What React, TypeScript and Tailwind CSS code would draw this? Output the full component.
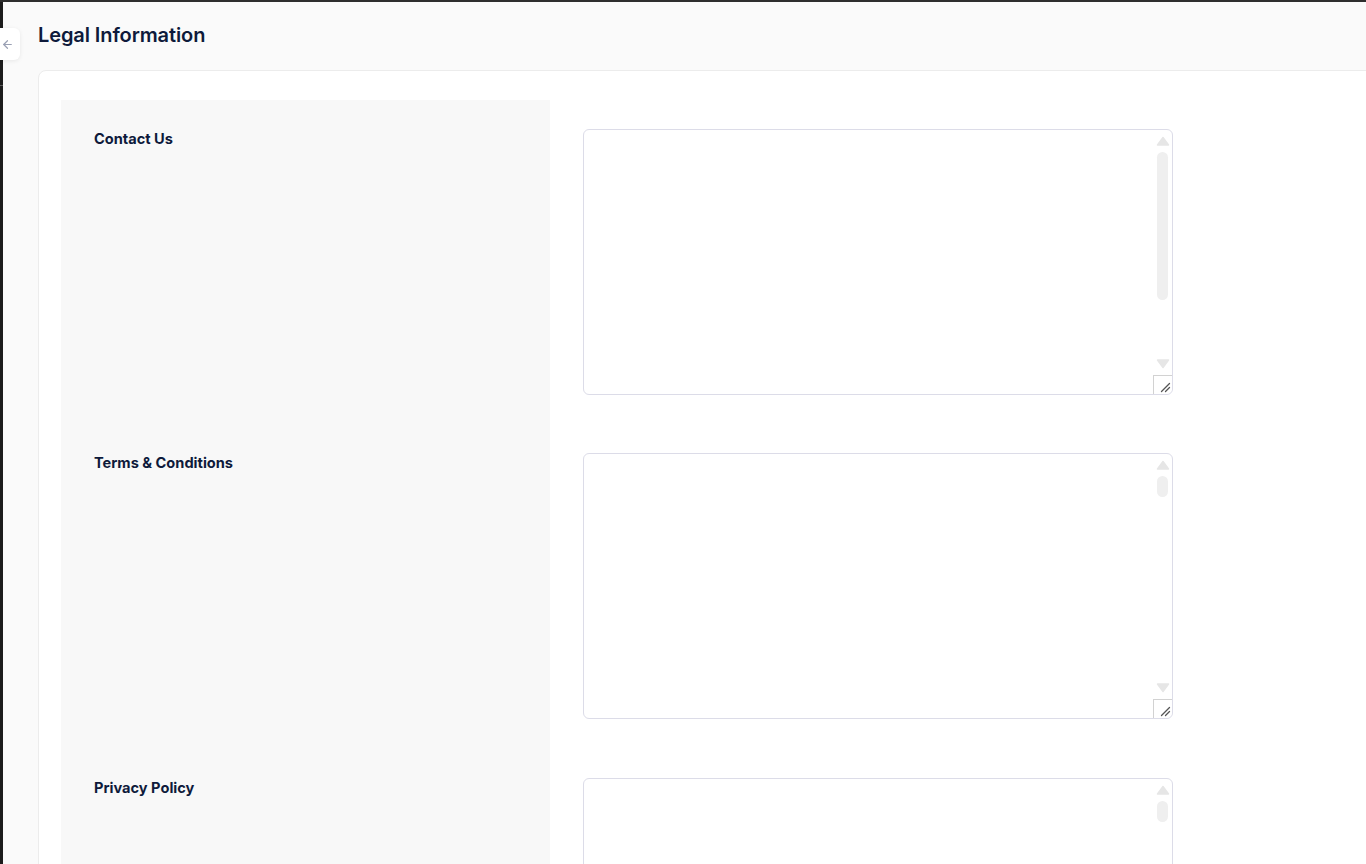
import React from "react";
import { ArrowLeft } from "lucide-react";

const rows = [
  { label: "Contact Us", thumb: 148, pb: "pb-[29px]" },
  { label: "Terms & Conditions", thumb: 21, pb: "pb-[30px]" },
  { label: "Privacy Policy", thumb: 21, pb: "pb-[29px]" },
];

function FakeScrollbar({ thumb }: { thumb: number }) {
  return (
    <>
      <svg
        className="absolute left-[573px] top-[7px]"
        width="14"
        height="10"
        viewBox="0 0 14 10"
      >
        <path d="M7 1.5 L12.5 9 L1.5 9 Z" fill="#e6e6e6" stroke="#e6e6e6" strokeLinejoin="round" strokeWidth="1.5" />
      </svg>
      <div
        className="absolute left-[574px] top-[23px] w-[11px] rounded-full bg-[#efefef]"
        style={{ height: thumb }}
      />
      <svg
        className="absolute left-[573px] top-[230px]"
        width="14"
        height="10"
        viewBox="0 0 14 10"
      >
        <path d="M1.5 1 L12.5 1 L7 8.5 Z" fill="#e6e6e6" stroke="#e6e6e6" strokeLinejoin="round" strokeWidth="1.5" />
      </svg>
      <div className="absolute left-[570px] top-[246px] h-[19px] w-[19px] rounded-br-md border-l border-t border-[#d2d2d2] bg-white">
        <svg className="absolute left-[6px] top-[6px]" width="11" height="11" viewBox="0 0 11 11">
          <path d="M1.5 9.5 L9.5 1.5" stroke="#555" strokeWidth="1.3" strokeLinecap="round" />
          <path d="M5.5 9.5 L9.5 5.5" stroke="#555" strokeWidth="1.3" strokeLinecap="round" />
        </svg>
      </div>
    </>
  );
}

export default function App() {
  return (
    <div
      className="relative min-h-screen bg-[#fafafa] overflow-hidden"
      style={{ fontFamily: "Inter, 'Noto Sans', sans-serif" }}
    >
      <div className="h-[2px] w-full bg-[#2e2e2e]" />
      <div className="flex">
        <div className="relative w-[3px] shrink-0 bg-[#1c1c1c] min-h-[862px]">
          <div className="absolute left-0 top-[83px] h-px w-[3px] bg-[#5a5a5a]" />
        </div>
        <div className="flex-1 pl-[35px]">
          <div className="flex h-[68px] items-center pb-[2px]">
            <h1 className="text-[20px] font-semibold leading-7 text-[#0e1a3b] tracking-[-0.1px]">
              Legal Information
            </h1>
          </div>
          <div className="w-[1400px] rounded-lg border border-[#ececec] bg-white pl-[22px] pt-[29px]">
            {rows.map((r) => (
              <div key={r.label} className="flex">
                <div className={`w-[489px] shrink-0 bg-[#f8f8f8] px-[33px] pt-[30px] ${r.pb}`}>
                  <div className="text-[14.6px] font-bold leading-[18px] text-[#0e1a3b]">
                    {r.label}
                  </div>
                </div>
                <div className={`pt-[29px] pl-[33px] ${r.pb}`}>
                  <div className="relative h-[266px] w-[590px]">
                    <textarea
                      className="block h-full w-full resize-none overflow-hidden rounded-md border border-[#dcdce8] bg-white px-3 py-2 text-sm leading-5 text-[#0e1a3b] outline-none"
                      defaultValue=""
                    />
                    <FakeScrollbar thumb={r.thumb} />
                  </div>
                </div>
              </div>
            ))}
          </div>
        </div>
      </div>
      <button className="absolute left-0 top-[28px] flex h-[32px] w-[20px] items-center justify-start rounded-r-md bg-white pl-[1px] shadow-[0_1px_4px_rgba(0,0,0,0.08)]">
        <ArrowLeft size={13} strokeWidth={2.2} color="#9aa0b4" />
      </button>
    </div>
  );
}
